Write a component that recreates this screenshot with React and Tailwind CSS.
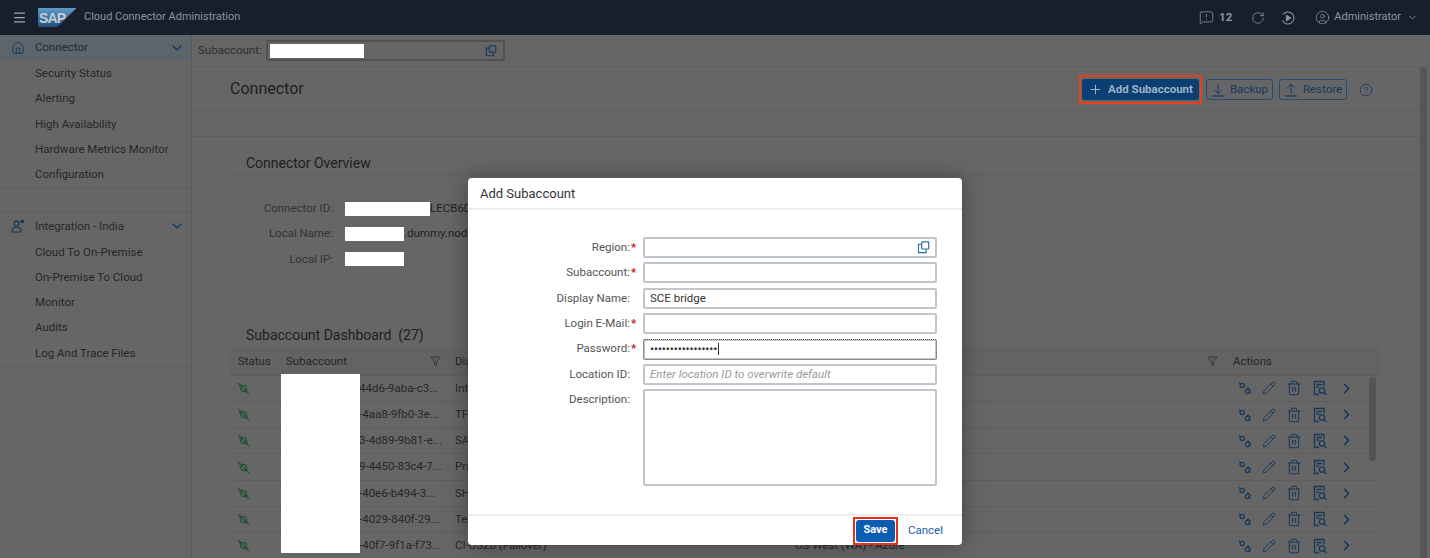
import React from 'react';
import { Menu, Home, ChevronDown, ChevronRight, RotateCw, CircleUser, CircleHelp, Pencil, Trash2, Plus, MessageSquareWarning } from 'lucide-react';

const sans = { fontFamily: 'Roboto, "Open Sans", Arial, sans-serif' };

const connectorItems = ['Security Status', 'Alerting', 'High Availability', 'Hardware Metrics Monitor', 'Configuration'];
const integrationItems = ['Cloud To On-Premise', 'On-Premise To Cloud', 'Monitor', 'Audits', 'Log And Trace Files'];

const rows = [
  { id: '44d6-9aba-c3...', name: 'Int' },
  { id: '-4aa8-9fb0-3e...', name: 'TF' },
  { id: '3-4d89-9b81-e...', name: 'SA' },
  { id: '9-4450-83c4-7...', name: 'Pri' },
  { id: '-40e6-b494-3...', name: 'SH' },
  { id: '-4029-840f-29...', name: 'Te' },
  { id: '-40f7-9f1a-f73...', name: 'CI-US20 (Failover)', region: 'US West (WA) - Azure' },
];

function ValueHelp({ className }) {
  return (
    <svg viewBox="0 0 14 14" className={className} fill="none" stroke="currentColor" strokeWidth="1.3">
      <path d="M5 3.5H1.6v9h8.2V9" />
      <rect x="5" y="1" width="7.6" height="7.6" rx="0.6" />
    </svg>
  );
}

function FilterIcon() {
  return (
    <svg viewBox="0 0 12 12" className="w-[11px] h-[11px] text-[#333]" fill="none" stroke="currentColor" strokeWidth="1">
      <path d="M1 1.2h10L7 6.2v4.4l-2-1.4v-3z" />
    </svg>
  );
}

function PlugStatus() {
  return (
    <svg viewBox="0 0 14 14" className="w-[13px] h-[13px] text-[#14502c]" fill="none" stroke="currentColor" strokeWidth="1.2">
      <path d="M1 1l12 12" />
      <circle cx="7" cy="7" r="3.2" />
      <path d="M2 5.5l3-3M9 11.5l2.5-2.5" strokeWidth="1" />
    </svg>
  );
}

function PlugAction() {
  return (
    <svg viewBox="0 0 14 14" className="w-[14px] h-[14px]" fill="none" stroke="currentColor" strokeWidth="1.3">
      <path d="M1 1.5l1.6 1.6M10.6 10.6l2 2" />
      <circle cx="4.2" cy="4.5" r="2.1" />
      <path d="M7.6 9.6l2.4-2.6 2.2 2.6-1.4 2a1.8 1.8 0 0 1-3.2-2z" />
    </svg>
  );
}

function DocSearch() {
  return (
    <svg viewBox="0 0 16 16" className="w-[16px] h-[16px]" fill="none" stroke="currentColor" strokeWidth="1.3">
      <path d="M12 6.5V1.5H2.5v13H7" />
      <path d="M4.5 4.5h5.5M4.5 7h2.5" />
      <circle cx="10" cy="10.5" r="2.7" />
      <path d="M12 12.5l2.6 2.6" />
    </svg>
  );
}

function Download({ up }) {
  return (
    <svg viewBox="0 0 14 14" className="w-[14px] h-[14px]" fill="none" stroke="currentColor" strokeWidth="1">
      {up ? <path d="M7 10.5V1M3.5 4.5L7 1l3.5 3.5" /> : <path d="M7 1v9.5M3.5 7L7 10.5 10.5 7" />}
      <path d="M1 13h12" strokeWidth="1.2" />
    </svg>
  );
}

function SapLogo() {
  return (
    <svg viewBox="0 0 39 19" className="w-[39px] h-[19px]">
      <defs>
        <linearGradient id="sapGrad" x1="0" y1="0" x2="0" y2="1">
          <stop offset="0" stopColor="#5f9bca" />
          <stop offset="1" stopColor="#1f4f7c" />
        </linearGradient>
      </defs>
      <path d="M0 0h38.5L19.5 19H0z" fill="url(#sapGrad)" />
      <text x="1" y="14.5" fontSize="14" fontWeight="700" fill="#c6ccd2" fontFamily="Liberation Sans, sans-serif" textLength="27">SAP</text>
    </svg>
  );
}

function SideGroup({ icon, title, items, active }) {
  return (
    <div className="border-b border-[#5e5e5e]">
      <div className={`h-[26px] flex items-center pl-[11px] pr-[6px] ${active ? 'bg-[#5c656b]' : ''}`}>
        <span className="w-[24px] text-[#10375f]">{icon}</span>
        <span className="flex-1 text-[#252a2e]">{title}</span>
        <ChevronDown className="w-[16px] h-[16px] text-[#0e3a66]" strokeWidth={2.2} />
      </div>
      {items.map((t) => (
        <div key={t} className="h-[25.3px] flex items-center pl-[35px] text-[#262626]">{t}</div>
      ))}
    </div>
  );
}

function Redact({ w }) {
  return <span className={`inline-block h-[14px] bg-white ${w}`} />;
}

function OverviewRow({ label, children }) {
  return (
    <div className="h-[25.3px] flex items-center">
      <span className="w-[103px] text-right text-[#333]">{label}</span>
      <span className="ml-[12px] flex items-center text-[#222]">{children}</span>
    </div>
  );
}

function Field({ label, required, children, tall, focus }) {
  return (
    <div className="flex items-start h-auto">
      <div className="w-[169px] shrink-0 h-[21px] flex items-center justify-end text-[#555]">
        {label}
        <span className={`w-[6px] ml-[1px] text-[#c4161c] font-bold ${required ? '' : 'invisible'}`}>*</span>
      </div>
      <div className={`ml-[6px] w-[294px] ${tall ? 'h-[97px]' : 'h-[21px]'} border-2 border-[#c0c6cc] rounded-[2px] flex items-center px-[5px] ${focus ? 'outline-1 outline-dotted outline-[#555] -outline-offset-1' : ''}`}>
        {children}
      </div>
    </div>
  );
}

export default function App() {
  return (
    <div style={sans} className="relative h-[558px] w-[1430px] overflow-hidden bg-[#666666] text-[11.5px] flex flex-col">
      {/* shell bar */}
      <header className="h-[35px] shrink-0 bg-[#161f2b] flex items-center pl-[12px] pr-[12px] text-[11px] text-[#8d949b]">
        <Menu className="w-[15px] h-[15px] text-[#a2a8ae]" />
        <span className="ml-[11px] flex"><SapLogo /></span>
        <span className="ml-[7px]">Cloud Connector Administration</span>
        <div className="ml-auto flex items-center">
          <MessageSquareWarning className="w-[15px] h-[15px]" strokeWidth={1.3} />
          <span className="ml-[5px] font-bold text-[11.5px]">12</span>
          <RotateCw className="ml-[19px] w-[14px] h-[14px]" strokeWidth={1.3} />
          <svg viewBox="0 0 14 14" className="ml-[16px] w-[14px] h-[14px]" fill="none" stroke="currentColor" strokeWidth="1.1">
            <path d="M2 3.5A6 6 0 1 1 1.5 9.5" />
            <path d="M5.5 4.5l4 2.5-4 2.5z" fill="currentColor" />
          </svg>
          <CircleUser className="ml-[20px] w-[15px] h-[15px]" strokeWidth={1.2} />
          <span className="ml-[4px]">Administrator</span>
          <ChevronDown className="ml-[6px] w-[11px] h-[11px]" />
        </div>
      </header>

      <div className="flex-1 flex min-h-0">
        {/* side navigation */}
        <aside className="w-[192px] shrink-0 border-r border-[#5a5a5a]">
          <SideGroup active title="Connector" items={connectorItems} icon={<Home className="w-[14px] h-[14px]" strokeWidth={1.5} />} />
          <div className="h-[25px] border-b border-[#5e5e5e]" />
          <SideGroup
            title="Integration - India"
            items={integrationItems}
            icon={
              <svg viewBox="0 0 14 14" className="w-[14px] h-[14px]" fill="none" stroke="currentColor" strokeWidth="1.2">
                <circle cx="5.5" cy="4.5" r="2.4" />
                <path d="M1 13v-1.5a3 3 0 0 1 3-3h3a3 3 0 0 1 3 3V13z" />
                <rect x="9.5" y="1" width="3.5" height="3" fill="currentColor" stroke="none" />
              </svg>
            }
          />
        </aside>

        <main className="relative flex-1 min-w-0 overflow-hidden">
          {/* subaccount selector */}
          <div className="h-[32px] border-b border-[#5e5e5e] flex items-center pl-[6px]">
            <span className="w-[61px] text-[#2e2e2e]">Subaccount:</span>
            <div className="ml-[7px] w-[239px] h-[21px] border-2 border-[#505050] rounded-[2px] flex items-center pl-[2px] pr-[6px]">
              <Redact w="w-[94px]" />
              <ValueHelp className="ml-auto w-[12px] h-[12px] text-[#123a63]" />
            </div>
          </div>

          {/* page title and actions */}
          <div className="h-[44px] border-b border-[#5e5e5e] flex items-center pl-[38px]">
            <h1 className="text-[16px] text-[#1f1f1f]">Connector</h1>
            <div className="ml-auto mr-[57px] mt-[2px] flex items-center">
              <span className="flex border-2 border-[#e8401c] px-[1px] py-[2px]">
                <button className="h-[21px] w-[117px] rounded-[3px] bg-[#0b3e73] text-[#9fb3c8] font-bold flex items-center justify-center gap-[5px]">
                  <Plus className="w-[15px] h-[15px]" strokeWidth={1.6} />
                  Add Subaccount
                </button>
              </span>
              <button className="ml-[4px] h-[21px] w-[67px] rounded-[3px] border border-[#264a70] text-[#143a60] flex items-center justify-center gap-[5px]">
                <Download />
                Backup
              </button>
              <button className="ml-[6px] h-[21px] w-[68px] rounded-[3px] border border-[#264a70] text-[#143a60] flex items-center justify-center gap-[5px]">
                <Download up />
                Restore
              </button>
              <CircleHelp className="ml-[12px] w-[14px] h-[14px] text-[#123a63]" strokeWidth={1.4} />
            </div>
          </div>
          <div className="h-[26px] border-b border-[#5e5e5e]" />

          {/* connector overview */}
          <section className="ml-[38px] mr-[12px]">
            <h2 className="h-[38px] pl-[16px] pt-[16px] border-b border-[#5e5e5e] text-[14px] leading-[20px] text-[#1f1f1f]">Connector Overview</h2>
            <div className="pt-[21px]">
              <OverviewRow label="Connector ID:"><Redact w="w-[85px]" />LECB6D</OverviewRow>
              <OverviewRow label="Local Name:"><Redact w="w-[59px]" />.dummy.node</OverviewRow>
              <OverviewRow label="Local IP:"><Redact w="w-[59px]" /></OverviewRow>
            </div>
          </section>

          {/* dashboard table */}
          <section className="ml-[38px] mt-[53px] w-[1150px]">
            <h2 className="h-[23px] pl-[16px] text-[14px] leading-[20px] text-[#1f1f1f]">Subaccount Dashboard&nbsp; (27)</h2>
            <div className="border-t border-[#5e5e5e] text-[#262626]">
              <div className="grid grid-cols-[48px_170px_171px_168px_438px_140px_15px] h-[27px] items-center border-b border-[#5c5c5c] bg-[#636363]">
                <div className="pl-[8px]">Status</div>
                <div className="pl-[8px] flex items-center pr-[7px] justify-between">Subaccount<FilterIcon /></div>
                <div className="pl-[7px]">Display Name</div>
                <div />
                <div className="flex justify-end pr-[7px]"><FilterIcon /></div>
                <div className="pl-[8px]">Actions</div>
                <div />
              </div>
              {rows.map((r, i) => (
                <div key={i} className="grid grid-cols-[48px_170px_171px_168px_438px_140px_15px] h-[26.2px] items-center border-b border-[#5e5e5e]">
                  <div className="pl-[7px]"><PlugStatus /></div>
                  <div className="pl-[81px] whitespace-nowrap">{r.id}</div>
                  <div className="pl-[7px] whitespace-nowrap">{r.name}</div>
                  <div />
                  <div className="pl-[8px]">{r.region}</div>
                  <div className="flex items-center pl-[13px] gap-[10px] text-[#17395c]">
                    <PlugAction />
                    <Pencil className="w-[14px] h-[14px]" strokeWidth={1.6} />
                    <Trash2 className="w-[16px] h-[16px]" strokeWidth={1.6} />
                    <DocSearch />
                    <ChevronRight className="w-[17px] h-[17px] text-[#0e3560]" strokeWidth={2.2} />
                  </div>
                  <div />
                </div>
              ))}
            </div>
            {/* table scrollbar */}
            <div className="absolute left-[1177px] top-[342px] w-[7px] h-[84px] rounded bg-[#545454]" />
            {/* redaction over the subaccount column */}
            <div className="absolute left-[89px] top-[339px] w-[79px] h-[179px] bg-white" />
          </section>

          {/* page scrollbar */}
          <div className="absolute left-[1228px] top-[32px] bottom-0 w-[7px] rounded-t bg-[#565656]" />
        </main>
      </div>

      {/* Add Subaccount dialog */}
      <div className="absolute left-[468px] top-[178px] w-[494px] h-[367px] bg-white rounded-[4px] shadow-[0_0_22px_rgba(0,0,0,0.35)] flex flex-col">
        <div className="h-[32px] shrink-0 border-b-2 border-[#ececec] pl-[12px] pt-[1px] flex items-center text-[13px] text-[#333]">Add Subaccount</div>
        <div className="flex-1 pt-[27px] flex flex-col gap-[4.4px]">
          <Field label="Region:" required><ValueHelp className="ml-auto w-[13px] h-[13px] text-[#2f6fae]" /></Field>
          <Field label="Subaccount:" required />
          <Field label="Display Name:"><span className="text-[#333]">SCE bridge</span></Field>
          <Field label="Login E-Mail:" required />
          <Field label="Password:" required focus>
            <span className="text-[#333] text-[11px] font-bold leading-none">•••••••••••••••••</span>
            <span className="ml-[1px] w-[1px] h-[12px] bg-[#333]" />
          </Field>
          <Field label="Location ID:"><span className="italic text-[#9a9a9a]">Enter location ID to overwrite default</span></Field>
          <Field label="Description:" tall />
        </div>
        <div className="h-[31px] shrink-0 border-t-2 border-[#ececec] flex items-center justify-end pr-[19px]">
          <span className="flex border-2 border-[#e8321c] p-[1px]">
            <button className="w-[39px] h-[22px] rounded-[3px] bg-[#0a5db3] text-white font-bold text-[11px]">Save</button>
          </span>
          <button className="ml-[10px] text-[#1d5c9e]">Cancel</button>
        </div>
      </div>
    </div>
  );
}
